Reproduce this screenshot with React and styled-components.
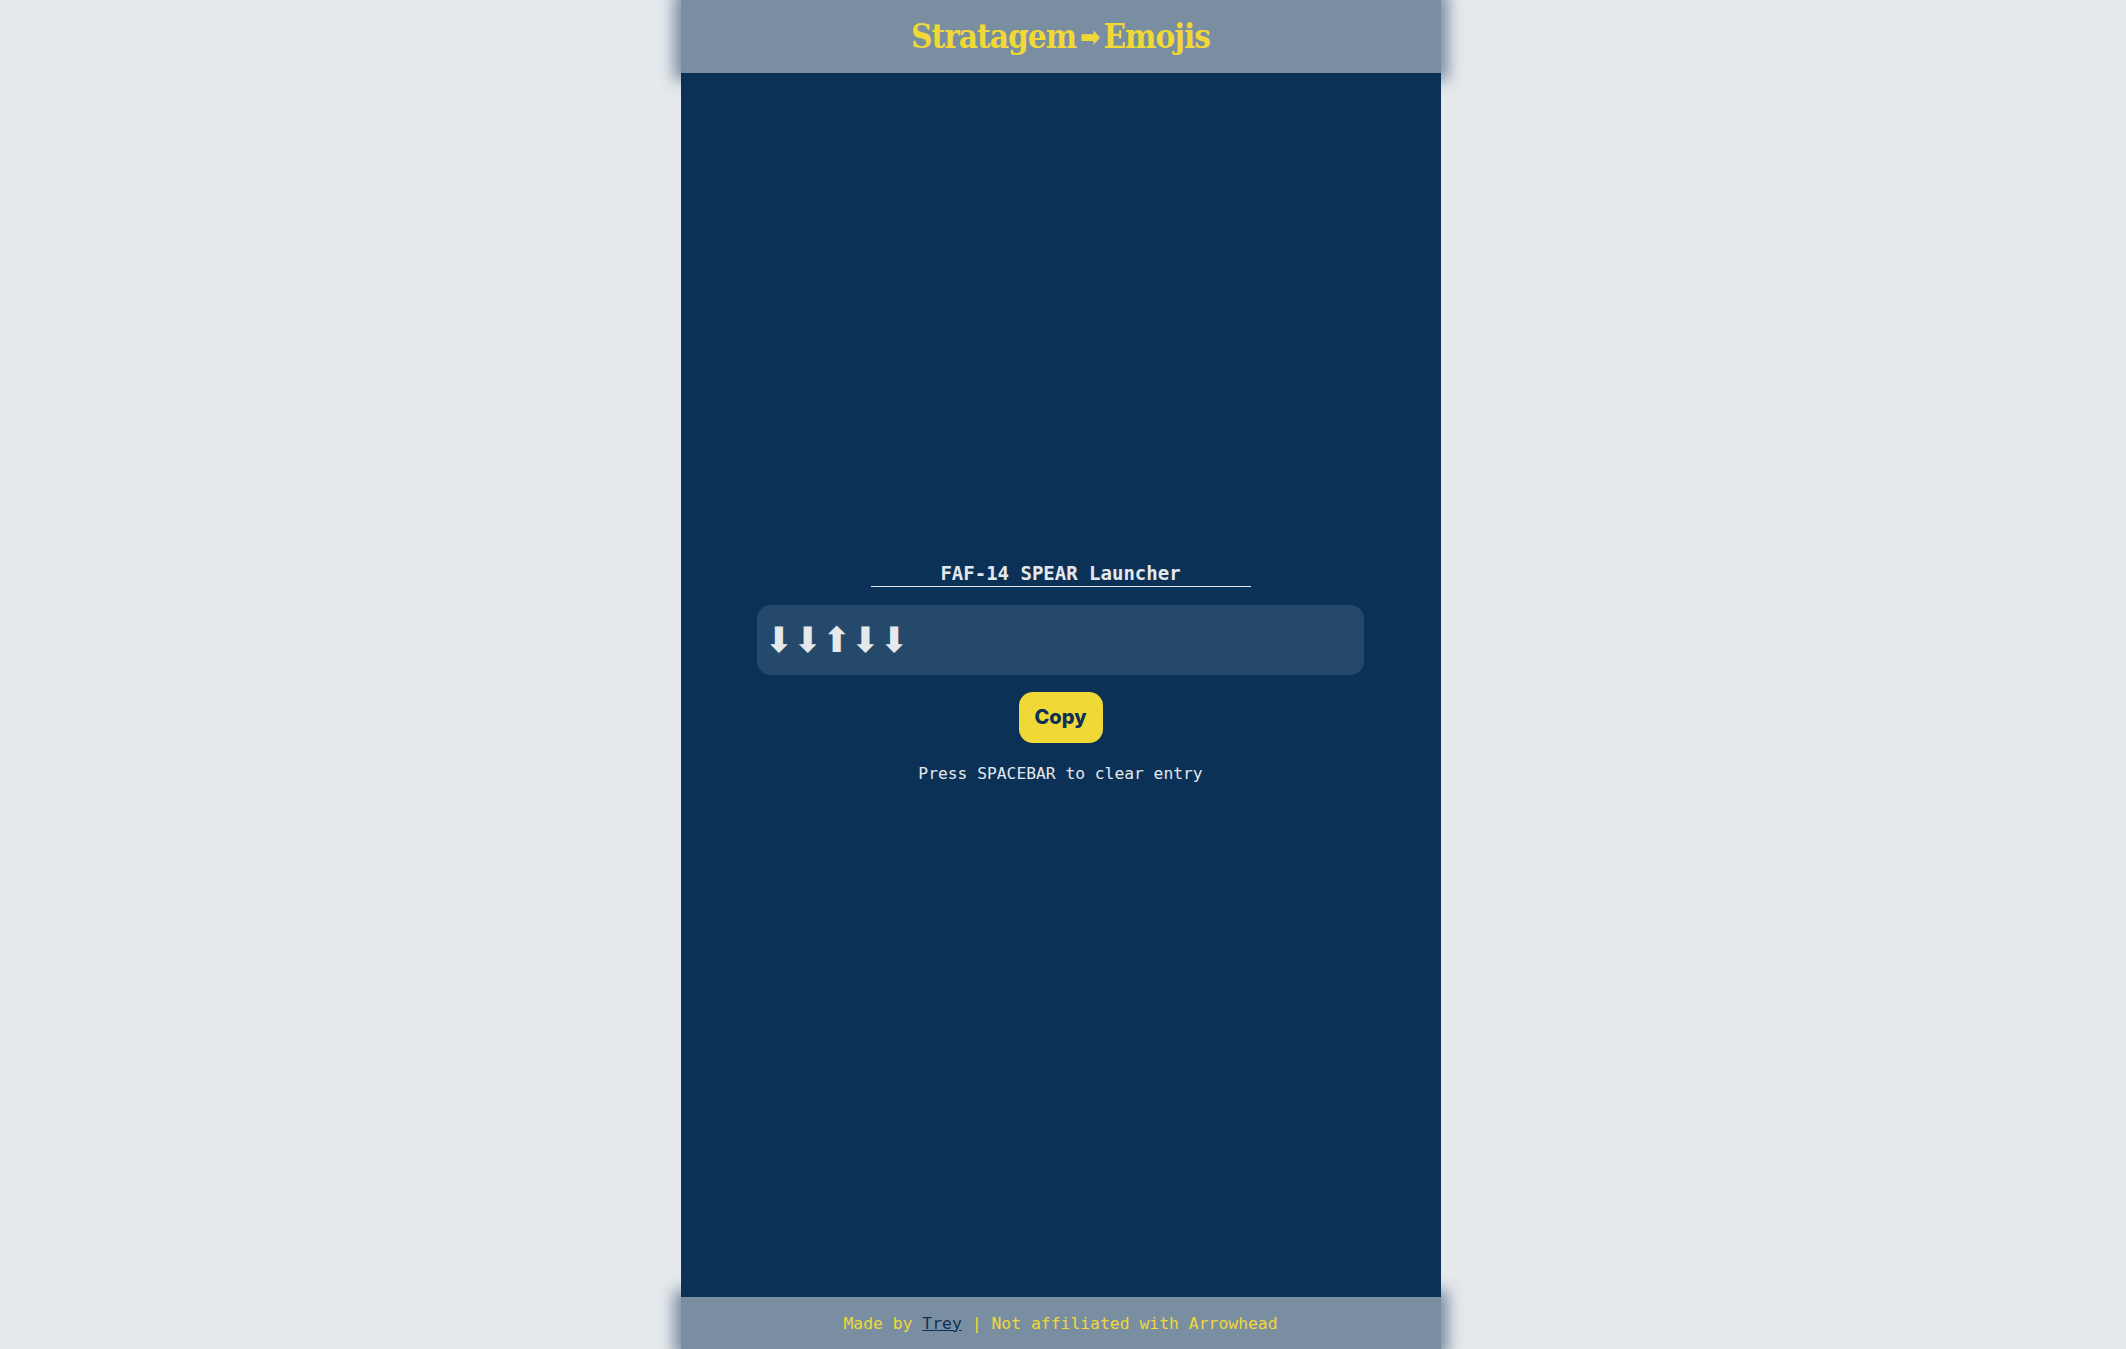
import React from "react";
import styled, { createGlobalStyle } from "styled-components";

const Global = createGlobalStyle`
  html, body { margin: 0; padding: 0; background: #e5e9ec; overflow: hidden; }
  body { font-family: "DejaVu Sans Mono", monospace; }
`;

const Page = styled.div`
  height: 100vh;
  display: flex;
  flex-direction: column;
  align-items: center;
  padding-right: 5px;
`;

const Bar = styled.div`
  width: 760px;
  height: ${(p) => p.$h}px;
  flex: none;
  display: flex;
  align-items: center;
  justify-content: center;
  background: #7a8ea2;
  box-shadow: 0 0 14px 7px #7a8ea2;
  position: relative;
  z-index: 1;
`;

const Title = styled.h1`
  margin: 0;
  font-family: "DejaVu Serif", serif;
  font-stretch: condensed;
  font-weight: 700;
  font-size: 33px;
  letter-spacing: -1px;
  color: #f0d936;
  display: flex;
  align-items: center;
  gap: 4px;
`;

const TitleArrow = styled.span`
  font-family: "DejaVu Sans", sans-serif;
  font-size: 27px;
`;

const Main = styled.main`
  flex: 1;
  width: 760px;
  background: #0c3156;
  display: flex;
  flex-direction: column;
  align-items: center;
  justify-content: center;
  padding-bottom: 26px;
  box-sizing: border-box;
  position: relative;
  z-index: 2;
`;

const Name = styled.div`
  width: 380px;
  text-align: center;
  font-family: "DejaVu Sans Mono", monospace;
  font-weight: 700;
  font-size: 19px;
  line-height: 22px;
  color: #e3e8ec;
  padding-bottom: 2px;
  border-bottom: 1.5px solid #e3e8ec;
`;

const Field = styled.div`
  margin-top: 18px;
  width: 607px;
  height: 70px;
  box-sizing: border-box;
  padding: 0 7px;
  border-radius: 14px;
  background: #25496a;
  display: flex;
  align-items: center;
  font-family: "DejaVu Sans", sans-serif;
  font-size: 35px;
  color: #e5e9ec;
  letter-spacing: -0.5px;
`;

const CopyButton = styled.button`
  margin-top: 17px;
  width: 84px;
  height: 51px;
  border: none;
  border-radius: 14px;
  background: #f0d936;
  color: #0c3156;
  font-family: Inter, "Liberation Sans", sans-serif;
  font-weight: 800;
  font-size: 20px;
  cursor: pointer;
`;

const Hint = styled.p`
  margin: 21px 0 0;
  font-family: "DejaVu Sans Mono", monospace;
  font-size: 16.3px;
  line-height: 19px;
  color: #e3e8ec;
`;

const FootText = styled.p`
  margin: 0;
  font-family: "DejaVu Sans Mono", monospace;
  font-size: 16.4px;
  color: #f0d936;
`;

const FootLink = styled.a`
  color: #0c3156;
  text-decoration: underline;
`;

export default function App() {
  return (
    <>
      <Global />
      <Page>
        <Bar $h={73}>
          <Title>
            Stratagem<TitleArrow>➡</TitleArrow>Emojis
          </Title>
        </Bar>
        <Main>
          <Name>FAF-14 SPEAR Launcher</Name>
          <Field>⬇⬇⬆⬇⬇</Field>
          <CopyButton>Copy</CopyButton>
          <Hint>Press SPACEBAR to clear entry</Hint>
        </Main>
        <Bar $h={52}>
          <FootText>
            Made by <FootLink href="#">Trey</FootLink> | Not affiliated with Arrowhead
          </FootText>
        </Bar>
      </Page>
    </>
  );
}
